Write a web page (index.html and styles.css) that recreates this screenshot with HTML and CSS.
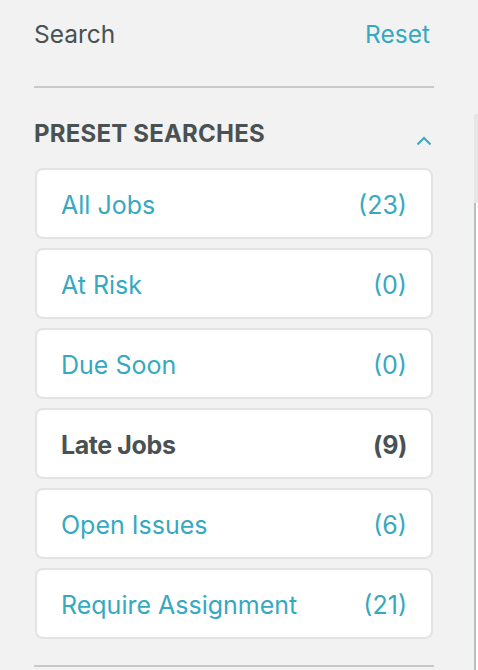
FILE: index.html
```html
<!DOCTYPE html>
<html lang="en">
<head>
    <meta charset="UTF-8">
    <meta name="viewport" content="width=device-width, initial-scale=1.0">
    <title>Search</title>
    <link rel="stylesheet" href="styles.css">
</head>
<body>
    <div class="page">
        <aside class="sidebar">
            <div class="sidebar-header">
                <span class="sidebar-title">Search</span>
                <a class="reset-link" href="#">Reset</a>
            </div>

            <section class="preset-section">
                <div class="section-header">
                    <h3>PRESET SEARCHES</h3>
                    <svg class="chevron" width="16" height="10" viewBox="0 0 16 10">
                        <path d="M1.5 8.5 L8 2 L14.5 8.5" fill="none" stroke="#36a9c1" stroke-width="2"/>
                    </svg>
                </div>

                <ul class="preset-list">
                    <li class="preset-item"><span>All Jobs</span><span>(23)</span></li>
                    <li class="preset-item"><span>At Risk</span><span>(0)</span></li>
                    <li class="preset-item"><span>Due Soon</span><span>(0)</span></li>
                    <li class="preset-item active"><span>Late Jobs</span><span>(9)</span></li>
                    <li class="preset-item"><span>Open Issues</span><span>(6)</span></li>
                    <li class="preset-item"><span>Require Assignment</span><span>(21)</span></li>
                </ul>
            </section>
        </aside>

        <div class="edge">
            <div class="edge-top"></div>
            <div class="edge-panel"></div>
        </div>
    </div>
</body>
</html>
```

FILE: styles.css
```css
html, body {
    margin: 0;
    padding: 0;
    height: 100%;
}

body {
    background-color: #f2f2f2;
    font-family: Inter, "Noto Sans", sans-serif;
    color: #4a5152;
    overflow: hidden;
}

.page {
    display: flex;
    height: 670px;
}

.sidebar {
    width: 400px;
    padding: 0 0 0 34px;
    flex-shrink: 0;
}

.sidebar-header {
    display: flex;
    justify-content: space-between;
    align-items: baseline;
    padding-top: 19px;
    height: 88px;
    box-sizing: border-box;
    border-bottom: 2px solid #c9c9c9;
    font-size: 24.5px;
}

.reset-link {
    color: #36a9c1;
    text-decoration: none;
    padding-right: 4px;
}

.preset-section {
    border-bottom: 2px solid #c9c9c9;
    padding-bottom: 26px;
}

.section-header {
    display: flex;
    justify-content: space-between;
    align-items: center;
    height: 80px;
}

.section-header h3 {
    margin: 0;
    font-size: 24px;
    font-weight: 700;
    padding-top: 10px;
    letter-spacing: 0.2px;
}

.chevron {
    margin-right: 2px;
    margin-top: 26px;
}

.preset-list {
    list-style: none;
    margin: 0;
    padding: 0;
    display: flex;
    flex-direction: column;
    gap: 10px;
}

.preset-item {
    display: flex;
    justify-content: space-between;
    align-items: center;
    height: 71px;
    box-sizing: border-box;
    margin-left: 1px;
    margin-right: 1px;
    padding: 2px 24px 0;
    background: #ffffff;
    border: 2px solid #e3e3e3;
    border-radius: 8px;
    color: #36a9c1;
    font-size: 25px;
}

.preset-list .preset-item + .preset-item {
    margin-top: -1px;
}

.preset-item.active {
    color: #4a5152;
    font-weight: 700;
    letter-spacing: -0.4px;
}

.edge {
    margin-left: 40px;
    width: 4px;
    display: flex;
    flex-direction: column;
}

.edge-top {
    margin-top: 114px;
    height: 89px;
    background: #e6e6e6;
}

.edge-panel {
    flex: 1;
    border-left: 2px solid #b9bfbf;
    background: #ffffff;
}
```
